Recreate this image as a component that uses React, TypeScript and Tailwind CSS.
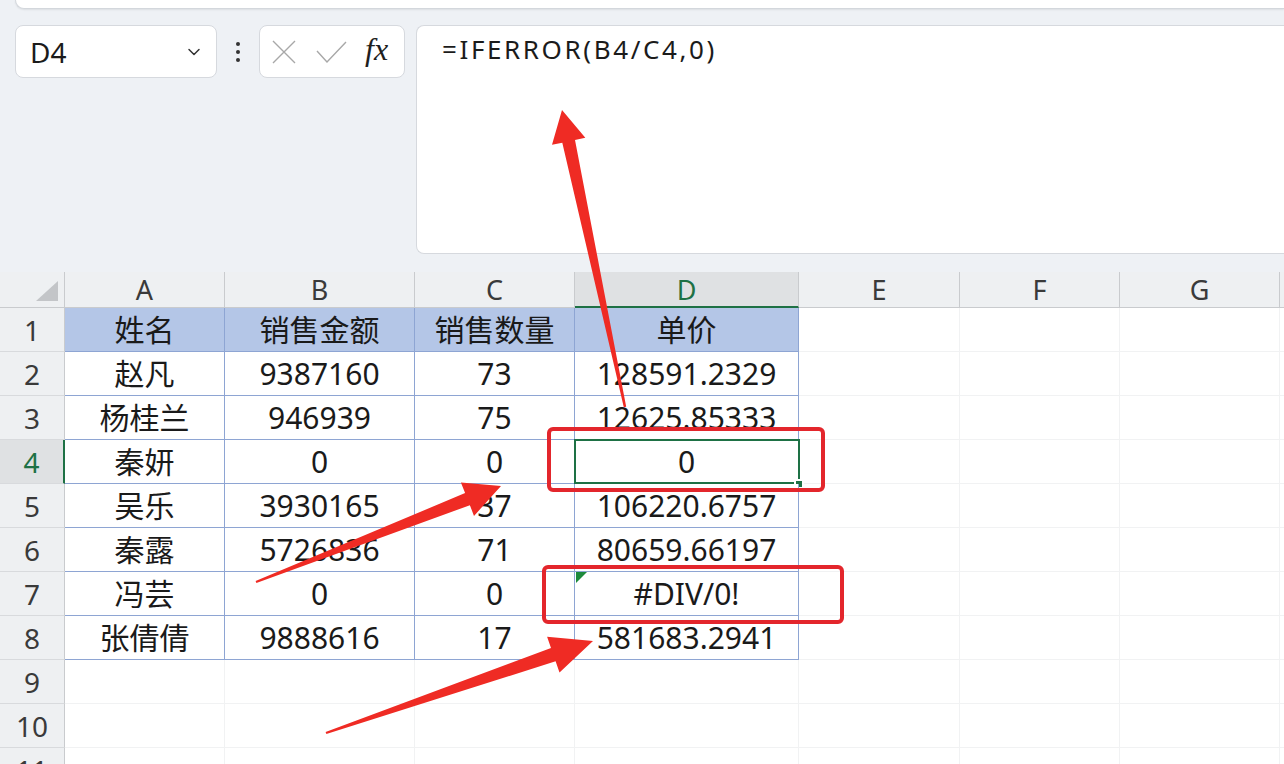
import React from 'react';
import { ChevronDown } from 'lucide-react';

const cols = ['A', 'B', 'C', 'D', 'E', 'F', 'G'];

const data: string[][] = [
  ['姓名', '销售金额', '销售数量', '单价'],
  ['赵凡', '9387160', '73', '128591.2329'],
  ['杨桂兰', '946939', '75', '12625.85333'],
  ['秦妍', '0', '0', '0'],
  ['吴乐', '3930165', '37', '106220.6757'],
  ['秦露', '5726836', '71', '80659.66197'],
  ['冯芸', '0', '0', '#DIV/0!'],
  ['张倩倩', '9888616', '17', '581683.2941'],
];

type Pt = [number, number];

// arrow as one polygon: tapered shaft + triangular head
function arrowPoints(tail: Pt, tip: Pt, headLen: number, headHalf: number, w0: number, w1: number) {
  const dx = tip[0] - tail[0];
  const dy = tip[1] - tail[1];
  const len = Math.hypot(dx, dy);
  const ux = dx / len;
  const uy = dy / len;
  const nx = -uy;
  const ny = ux;
  const bx = tip[0] - ux * headLen;
  const by = tip[1] - uy * headLen;
  const pts: Pt[] = [
    [tail[0] + nx * w0, tail[1] + ny * w0],
    [bx + nx * w1, by + ny * w1],
    [bx + nx * headHalf, by + ny * headHalf],
    tip,
    [bx - nx * headHalf, by - ny * headHalf],
    [bx - nx * w1, by - ny * w1],
    [tail[0] - nx * w0, tail[1] - ny * w0],
  ];
  return pts.map((p) => `${p[0].toFixed(1)},${p[1].toFixed(1)}`).join(' ');
}

const FormulaBar: React.FC = () => (
  <div className="h-[272px] flex flex-col">
    <div className="h-[9px] ml-[15px] bg-white rounded-bl-[12px] border-b border-l border-[#d3d7dc] shadow-[0_1px_2px_rgba(0,0,0,0.08)]" />
    <div className="flex items-start pt-[16px] pl-[15px]">
      <div className="w-[202px] h-[53px] bg-white border border-[#d6d9de] rounded-[8px] flex items-center justify-between pl-[14px] pr-[12px]">
        <span className="text-[28px] text-[#1b1b1b] leading-none">D4</span>
        <ChevronDown className="w-[20px] h-[20px] text-[#333]" strokeWidth={1.8} />
      </div>
      <div className="w-[42px] h-[53px] flex flex-col items-center justify-center gap-[4px]">
        <span className="w-[4px] h-[4px] rounded-full bg-[#333]" />
        <span className="w-[4px] h-[4px] rounded-full bg-[#333]" />
        <span className="w-[4px] h-[4px] rounded-full bg-[#333]" />
      </div>
      <div className="w-[146px] h-[53px] bg-white border border-[#d6d9de] rounded-[8px] flex items-center pl-[12px] gap-[20px]">
        <svg width="24" height="24" viewBox="0 0 24 24" className="shrink-0">
          <path d="M1 1 L23 23 M23 1 L1 23" stroke="#a8a8a8" strokeWidth="1.4" fill="none" />
        </svg>
        <svg width="31" height="22" viewBox="0 0 31 22" className="shrink-0">
          <path d="M1 10 L11 21 L30 1" stroke="#a8a8a8" strokeWidth="1.4" fill="none" />
        </svg>
        <span className="text-[32px] italic text-[#1e1e1e] leading-none font-['Liberation_Serif',serif] -mt-[6px] -ml-[2px]">fx</span>
      </div>
      <div className="ml-[11px] flex-1 h-[229px] bg-white border border-r-0 border-[#d6d9de] rounded-l-[8px] pl-[25px] pt-[10px]">
        <span className="text-[26px] tracking-[2.6px] text-[#1b1b1b] leading-none">=IFERROR(B4/C4,0)</span>
      </div>
    </div>
  </div>
);

const Sheet: React.FC = () => {
  const rowCount = 11;
  return (
    <div className="grid grid-cols-[65px_160px_190px_160px_224px_161px_160px_160px_1fr] bg-white">
      {/* header row */}
      <div className="h-[36px] bg-[#eef0f2] border-b border-r border-[#c9cbce] flex items-end justify-end pr-[6px] pb-[6px]">
        <div className="w-0 h-0 border-l-[22px] border-l-transparent border-b-[20px] border-b-[#c3c5c8]" />
      </div>
      {cols.map((c) =>
        c === 'D' ? (
          <div key={c} className="h-[36px] bg-[#dfe1e3] border-r border-[#c9cbce] border-b-2 border-b-[#1e7145] flex items-center justify-center text-[27px] text-[#1e7145] leading-none">
            {c}
          </div>
        ) : (
          <div key={c} className="h-[36px] bg-[#eef0f2] border-r border-b border-[#c9cbce] flex items-center justify-center text-[27px] text-[#3a3a3a] leading-none">
            {c}
          </div>
        )
      )}
      <div className="h-[36px] bg-[#eef0f2] border-b border-[#c9cbce]" />

      {Array.from({ length: rowCount }).map((_, r) => {
        const rowNo = r + 1;
        const row = data[r];
        const sel = rowNo === 4;
        return (
          <React.Fragment key={rowNo}>
            <div
              className={
                sel
                  ? 'h-[44px] bg-[#dfe1e3] border-b border-[#d8dadd] border-r-2 border-r-[#1e7145] flex items-center justify-center text-[28px] text-[#1e7145] leading-none'
                  : 'h-[44px] bg-[#eef0f2] border-b border-[#d8dadd] border-r border-r-[#c9cbce] flex items-center justify-center text-[28px] text-[#3a3a3a] leading-none'
              }
            >
              {rowNo}
            </div>
            {cols.map((c, ci) => {
              const inTable = row && ci < 4;
              const text = inTable ? row[ci] : '';
              return (
                <div
                  key={c}
                  className={
                    inTable
                      ? rowNo === 1
                        ? 'h-[44px] bg-[#b4c6e7] border-r border-b border-[#8ea5d3] flex items-center justify-center text-[30px] text-[#1a1a1a] leading-none'
                        : 'relative h-[44px] bg-white border-r border-b border-[#8ea5d3] flex items-center justify-center text-[30px] text-[#1a1a1a] leading-none'
                      : 'h-[44px] border-r border-b border-[#f1f2f3]'
                  }
                >
                  {text}
                  {inTable && rowNo === 4 && ci === 3 && (
                    <>
                      <div className="absolute -left-[1px] -top-[1px] -right-[2px] -bottom-[1px] border-2 border-[#1e7145]" />
                      <div className="absolute -right-[6px] -bottom-[6px] w-[10px] h-[10px] bg-[#1e7145] border-2 border-white" />
                    </>
                  )}
                  {inTable && rowNo === 7 && ci === 3 && (
                    <div className="absolute left-[1px] top-0 w-0 h-0 border-t-[11px] border-t-[#1e8a3c] border-r-[11px] border-r-transparent" />
                  )}
                </div>
              );
            })}
            <div className="h-[44px] border-b border-[#f1f2f3]" />
          </React.Fragment>
        );
      })}
    </div>
  );
};

export default function App() {
  const red = '#ef2b24';
  return (
    <div className="relative w-[1284px] h-[764px] overflow-hidden bg-[#eef1f5] font-['Noto_Sans','Noto_Sans_CJK_SC',sans-serif]">
      <FormulaBar />
      <Sheet />

      {/* callout boxes */}
      <div className="absolute left-[547px] top-[427px] w-[278px] h-[65px] border-[4px] border-[#e3262c] rounded-[6px] pointer-events-none" />
      <div className="absolute left-[542px] top-[565px] w-[302px] h-[59px] border-[4px] border-[#e3262c] rounded-[6px] pointer-events-none" />

      {/* arrows */}
      <svg className="absolute inset-0 pointer-events-none" width="1284" height="764" viewBox="0 0 1284 764">
        <polygon points={arrowPoints([625, 407], [562, 110], 32, 17, 1.2, 6.5)} fill={red} />
        <polygon points={arrowPoints([256, 582], [501, 486], 36, 18, 1.2, 6.5)} fill={red} />
        <polygon points={arrowPoints([326, 733], [593, 641], 42, 19, 1.2, 7)} fill={red} />
      </svg>
    </div>
  );
}
